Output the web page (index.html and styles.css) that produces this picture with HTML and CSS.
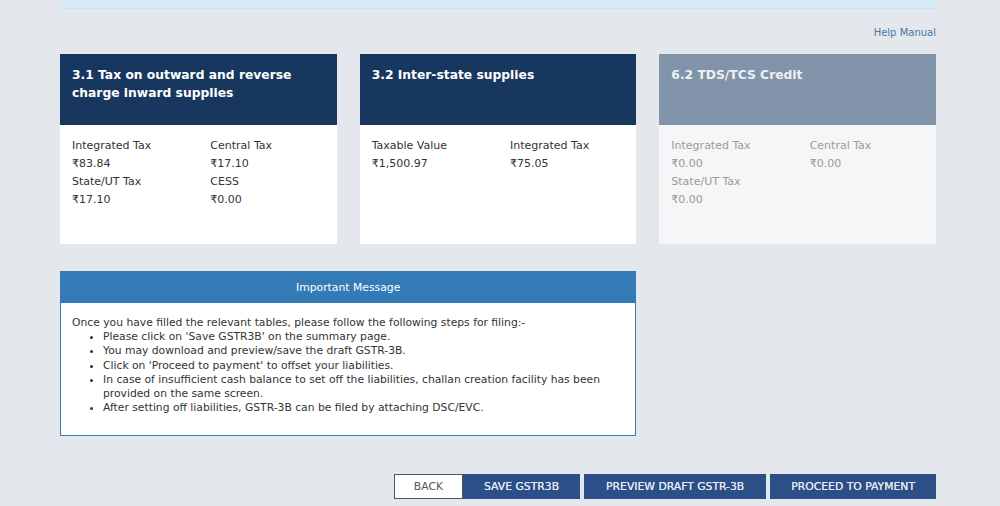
FILE: index.html
```html
<!DOCTYPE html>
<html lang="en">
<head>
<meta charset="utf-8">
<title>GSTR-3B</title>
<link rel="stylesheet" href="styles.css">
</head>
<body>
<div class="page">
  <div class="alert-tail"></div>
  <div class="help-row"><a class="help" href="#">Help Manual</a></div>

  <div class="grid">
    <div class="card">
      <div class="card-head">3.1 Tax on outward and reverse charge inward supplies</div>
      <div class="card-body">
        <div class="cell"><div class="lbl">Integrated Tax</div><div class="val">₹83.84</div></div>
        <div class="cell"><div class="lbl">Central Tax</div><div class="val">₹17.10</div></div>
        <div class="cell"><div class="lbl">State/UT Tax</div><div class="val">₹17.10</div></div>
        <div class="cell"><div class="lbl">CESS</div><div class="val">₹0.00</div></div>
      </div>
    </div>
    <div class="card">
      <div class="card-head">3.2 Inter-state supplies</div>
      <div class="card-body">
        <div class="cell"><div class="lbl">Taxable Value</div><div class="val">₹1,500.97</div></div>
        <div class="cell"><div class="lbl">Integrated Tax</div><div class="val">₹75.05</div></div>
      </div>
    </div>
    <div class="card card-disabled">
      <div class="card-head">6.2 TDS/TCS Credit</div>
      <div class="card-body">
        <div class="cell"><div class="lbl">Integrated Tax</div><div class="val">₹0.00</div></div>
        <div class="cell"><div class="lbl">Central Tax</div><div class="val">₹0.00</div></div>
        <div class="cell"><div class="lbl">State/UT Tax</div><div class="val">₹0.00</div></div>
      </div>
    </div>
  </div>

  <div class="grid msg-grid">
    <div class="msg">
      <div class="msg-head">Important Message</div>
      <div class="msg-body">
        <p>Once you have filled the relevant tables, please follow the following steps for filing:-</p>
        <ul>
          <li>Please click on 'Save GSTR3B' on the summary page.</li>
          <li>You may download and preview/save the draft GSTR-3B.</li>
          <li>Click on 'Proceed to payment' to offset your liabilities.</li>
          <li>In case of insufficient cash balance to set off the liabilities, challan creation facility has been provided on the same screen.</li>
          <li>After setting off liabilities, GSTR-3B can be filed by attaching DSC/EVC.</li>
        </ul>
      </div>
    </div>
  </div>

  <div class="actions">
    <button class="btn btn-back">BACK</button><button class="btn btn-primary">SAVE GSTR3B</button>
    <button class="btn btn-primary btn-wide">PREVIEW DRAFT GSTR-3B</button>
    <button class="btn btn-primary">PROCEED TO PAYMENT</button>
  </div>
</div>
</body>
</html>
```
FILE: styles.css
```css
html, body {
  margin: 0;
  padding: 0;
  background: #e4e8ec;
  font-family: "DejaVu Sans", Verdana, sans-serif;
  color: #333;
}
.page {
  width: 876px;
  margin-left: 60px;
}
.alert-tail {
  height: 8px;
  background: #d9ebf7;
  border-bottom: 1px solid #cde1ee;
}
.help-row {
  display: flex;
  justify-content: flex-end;
  margin-top: 18px;
  height: 12px;
  margin-bottom: 15px;
}
.help {
  font-size: 10px;
  line-height: 12px;
  color: #4a78a8;
  text-decoration: none;
}
.grid {
  display: grid;
  grid-template-columns: repeat(3, 1fr);
  column-gap: 23px;
}
.card {
  display: flex;
  flex-direction: column;
  height: 190px;
  background: #fff;
}
.card-head {
  height: 71px;
  box-sizing: border-box;
  padding: 13px 12px 0;
  background: #17375e;
  color: #fff;
  font-weight: bold;
  font-size: 12.3px;
  line-height: 17.5px;
}
.card-body {
  flex: 1;
  display: grid;
  grid-template-columns: 1fr 1fr;
  align-content: start;
  padding-top: 12px;
}
.cell {
  padding-left: 12px;
}
.lbl, .val {
  font-size: 11px;
  line-height: 18px;
  color: #333;
}
.card-disabled { background: #f5f6f7; }
.card-disabled .card-head { background: #8093a9; color: #eef1f4; }
.card-disabled .lbl, .card-disabled .val { color: #9a9a9a; }

.msg-grid { margin-top: 27px; }
.msg {
  grid-column: span 2;
  box-sizing: border-box;
  height: 165px;
  border: 1px solid #337ab7;
  background: #fff;
}
.msg-head {
  height: 31px;
  background: #337ab7;
  color: #fff;
  font-size: 10.8px;
  line-height: 32px;
  text-align: center;
}
.msg-body {
  padding: 13px 11px 0;
  font-size: 10.75px;
  line-height: 14.2px;
  color: #333;
}
.msg-body p { margin: 0; }
.msg-body ul {
  margin: 0;
  padding-left: 31px;
}
.actions {
  display: flex;
  justify-content: flex-end;
  align-items: stretch;
  gap: 4px;
  margin-top: 38px;
}
.btn {
  height: 25px;
  padding: 0 20px;
  border: 1px solid #2c4f87;
  font-family: "DejaVu Sans", Verdana, sans-serif;
  font-size: 10.8px;
  background: #2c4f87;
  color: #e4eaf2;
}
.btn-primary {
  text-shadow: 0 0 0.5px #e4eaf2;
}
.btn-wide {
  padding: 0 21px;
}
.btn-back {
  padding: 0 19px;
  background: #fff;
  color: #555;
  border-color: #555;
  margin-right: -4px;
}
```
